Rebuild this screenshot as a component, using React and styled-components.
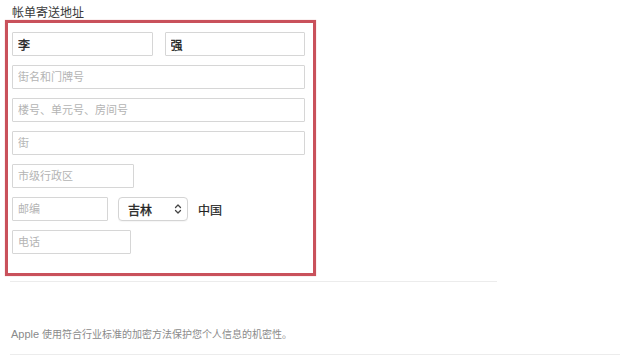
import styled, { createGlobalStyle } from 'styled-components';

const GlobalStyle = createGlobalStyle`
    html, body {
        margin: 0;
        padding: 0;
        background: #ffffff;
        font-family: "Liberation Sans", "Noto Sans CJK SC", sans-serif;
    }
`;

const Page = styled.div`
    width: 620px;
    height: 358px;
    padding: 6px 0 0 5px;
    box-sizing: border-box;
    overflow: hidden;
`;

const Title = styled.div`
    margin-left: 7px;
    height: 14px;
    line-height: 14px;
    font-size: 12px;
    color: #3a3a3a;
`;

const HighlightBox = styled.div`
    width: 311px;
    height: 256px;
    box-sizing: border-box;
    border: 3px solid #c9515b;
    box-shadow: 0 0 1px rgba(201, 81, 91, 0.5);
    padding: 9px 8px 19px 4px;
    display: flex;
    flex-direction: column;
    gap: 9px;
`;

const Row = styled.div`
    display: flex;
    align-items: center;
    gap: ${(p) => p.$gap || 12}px;
`;

const Field = styled.input`
    width: ${(p) => (p.$width ? `${p.$width}px` : '100%')};
    flex: ${(p) => (p.$width ? 'none' : '1')};
    min-width: 0;
    height: 24px;
    box-sizing: border-box;
    border: 1px solid #d6d6d6;
    border-radius: 1px;
    padding: 0 5px;
    font-family: "Liberation Sans", "Noto Sans CJK SC", sans-serif;
    font-size: 12px;
    color: #222;
    -webkit-text-stroke: 0.35px #222;
    background: #fff;
    &::placeholder {
        color: #b4b4b4;
        -webkit-text-stroke: 0;
        font-size: 11px;
    }
    &:focus {
        outline: none;
    }
`;

const SelectBox = styled.div`
    width: 70px;
    height: 24px;
    box-sizing: border-box;
    border: 1px solid #d4d4d4;
    border-radius: 4px;
    display: flex;
    align-items: center;
    justify-content: space-between;
    padding: 0 5px 0 9px;
    font-size: 12px;
    color: #222;
    -webkit-text-stroke: 0.35px #222;
    background: #fff;
    box-shadow: 0 1px 1px rgba(0, 0, 0, 0.04);
`;

const Country = styled.span`
    font-size: 12px;
    color: #222;
    -webkit-text-stroke: 0.2px #222;
`;

const Divider = styled.div`
    margin: ${(p) => p.$top}px 0 0 5px;
    width: ${(p) => p.$width}px;
    height: 1px;
    background: #ececec;
`;

const Note = styled.div`
    margin: 45px 0 0 6px;
    font-size: 10px;
    line-height: 14px;
    color: #8a8a8a;
`;

const Brand = styled.span`
    font-size: 11px;
`;

const Chevron = () => (
    <svg width="8" height="12" viewBox="0 0 8 12" fill="none" stroke="#444" strokeWidth="1.3" strokeLinecap="round" strokeLinejoin="round">
        <path d="M1.5 4.5 L4 2 L6.5 4.5" />
        <path d="M1.5 7.5 L4 10 L6.5 7.5" />
    </svg>
);

const App = () => {
    return (
        <>
            <GlobalStyle />
            <Page>
                <Title>帐单寄送地址</Title>
                <HighlightBox>
                    <Row>
                        <Field defaultValue="李" />
                        <Field defaultValue="强" />
                    </Row>
                    <Row>
                        <Field placeholder="街名和门牌号" />
                    </Row>
                    <Row>
                        <Field placeholder="楼号、单元号、房间号" />
                    </Row>
                    <Row>
                        <Field placeholder="街" />
                    </Row>
                    <Row>
                        <Field $width={122} placeholder="市级行政区" />
                    </Row>
                    <Row $gap={10}>
                        <Field $width={96} placeholder="邮编" />
                        <SelectBox>
                            <span>吉林</span>
                            <Chevron />
                        </SelectBox>
                        <Country>中国</Country>
                    </Row>
                    <Row>
                        <Field $width={119} placeholder="电话" />
                    </Row>
                </HighlightBox>
                <Divider $top={5} $width={487} />
                <Note>
                    <Brand>Apple</Brand> 使用符合行业标准的加密方法保护您个人信息的机密性。
                </Note>
                <Divider $top={12} $width={610} />
            </Page>
        </>
    );
};

export default App;
